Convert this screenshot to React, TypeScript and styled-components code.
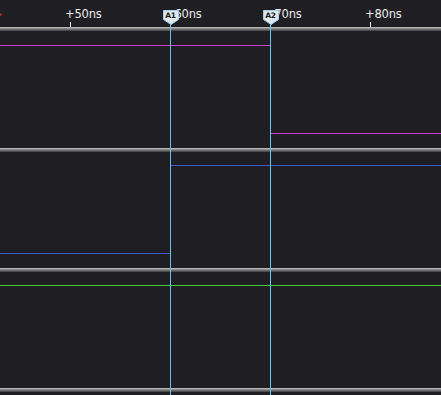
import React from 'react';
import styled, { createGlobalStyle } from 'styled-components';

const GlobalStyle = createGlobalStyle`
  html, body {
    margin: 0;
    padding: 0;
    background: #1f1f23;
    overflow: hidden;
  }
`;

const ORIGIN_X = 70;
const PX_PER_NS = 10;
const toX = (ns: number) => ORIGIN_X + (ns - 50) * PX_PER_NS;

interface Segment {
    from: number;
    to: number;
    y: number;
}

interface LaneData {
    height: number;
    color: string;
    segments: Segment[];
}

const lanes: LaneData[] = [
    {
        height: 117,
        color: '#cf3fcf',
        segments: [
            { from: 0, to: 270, y: 14 },
            { from: 270, to: 441, y: 102 },
        ],
    },
    {
        height: 116,
        color: '#3f5bd3',
        segments: [
            { from: 0, to: 170, y: 101 },
            { from: 170, to: 441, y: 13 },
        ],
    },
    {
        height: 116,
        color: '#45c83c',
        segments: [{ from: 0, to: 441, y: 13 }],
    },
];

const ticks = [50, 60, 70, 80];
const cursors = [
    { name: 'A1', ns: 60 },
    { name: 'A2', ns: 70 },
];

const App: React.FC = () => {
    return (
        <>
            <GlobalStyle />
            <Viewer>
                <TimeAxis>
                    <EdgeMark />
                    {ticks.map((t) => (
                        <Tick key={t} style={{ left: toX(t) }}>
                            <TickLabel>+{t}ns</TickLabel>
                            <TickMark />
                        </Tick>
                    ))}
                </TimeAxis>
                {lanes.map((lane, i) => (
                    <Lane key={i}>
                        <Separator />
                        <Wave $height={lane.height}>
                            <svg width="100%" height={lane.height}>
                                {lane.segments.map((s, j) => (
                                    <line
                                        key={j}
                                        x1={s.from}
                                        x2={s.to}
                                        y1={s.y + 0.5}
                                        y2={s.y + 0.5}
                                        stroke={lane.color}
                                        strokeWidth={1}
                                    />
                                ))}
                            </svg>
                        </Wave>
                    </Lane>
                ))}
                <Separator />
                {/* cursors sit over the lanes */}
                {cursors.map((c) => (
                    <Cursor key={c.name} style={{ left: toX(c.ns) }}>
                        <CursorLine />
                        <Flag>
                            <svg width="16" height="15" viewBox="0 0 16 15">
                                <path
                                    d="M0.5 0.5 H15.5 V9.5 L8 14.5 L0.5 9.5 Z"
                                    fill="#dfe7ec"
                                    stroke="#9fd2ea"
                                    strokeWidth="1"
                                />
                            </svg>
                            <FlagText>{c.name}</FlagText>
                        </Flag>
                    </Cursor>
                ))}
            </Viewer>
        </>
    );
};

const Viewer = styled.div`
  position: relative;
  width: 441px;
  height: 395px;
  overflow: hidden;
  background: #1f1f23;
  display: flex;
  flex-direction: column;
`;

const TimeAxis = styled.div`
  position: relative;
  height: 27px;
  flex-shrink: 0;
`;

const EdgeMark = styled.div`
  position: absolute;
  left: -2px;
  top: 14px;
  width: 4px;
  height: 2px;
  background: #b03030;
  transform: rotate(-30deg);
`;

const Tick = styled.div`
  position: absolute;
  top: 0;
  height: 27px;
  width: 1px;
`;

const TickLabel = styled.span`
  position: absolute;
  left: -5px;
  top: 7px;
  font-family: "DejaVu Sans", sans-serif;
  font-size: 11.5px;
  color: #ececec;
  white-space: nowrap;
  letter-spacing: -0.2px;
`;

const TickMark = styled.div`
  position: absolute;
  left: 0;
  bottom: 0;
  width: 1px;
  height: 5px;
  background: #e8e8e8;
`;

const Lane = styled.div`
  display: flex;
  flex-direction: column;
  flex-shrink: 0;
`;

const Separator = styled.div`
  height: 4px;
  flex-shrink: 0;
  background: linear-gradient(#b4b4b4 0, #b4b4b4 25%, #8c8c8c 25%, #8c8c8c 50%, #6a6a6a 50%, #6a6a6a 75%, #4e4e4e 75%);
`;

const Wave = styled.div<{ $height: number }>`
  height: ${(p) => p.$height}px;
  svg {
    display: block;
  }
`;

const Cursor = styled.div`
  position: absolute;
  top: 0;
  bottom: 0;
  width: 1px;
`;

const CursorLine = styled.div`
  position: absolute;
  left: 0;
  top: 20px;
  bottom: 0;
  width: 1px;
  background: #66c6ec;
`;

const Flag = styled.div`
  position: absolute;
  left: -7.5px;
  top: 10px;
  width: 16px;
  height: 15px;
  svg {
    position: absolute;
    left: 0;
    top: 0;
  }
`;

const FlagText = styled.span`
  position: absolute;
  left: 0;
  top: 1px;
  width: 16px;
  text-align: center;
  font-family: "DejaVu Sans", sans-serif;
  font-weight: bold;
  font-size: 7.5px;
  line-height: 9px;
  color: #1c1c1c;
  letter-spacing: -0.3px;
`;

export default App;
